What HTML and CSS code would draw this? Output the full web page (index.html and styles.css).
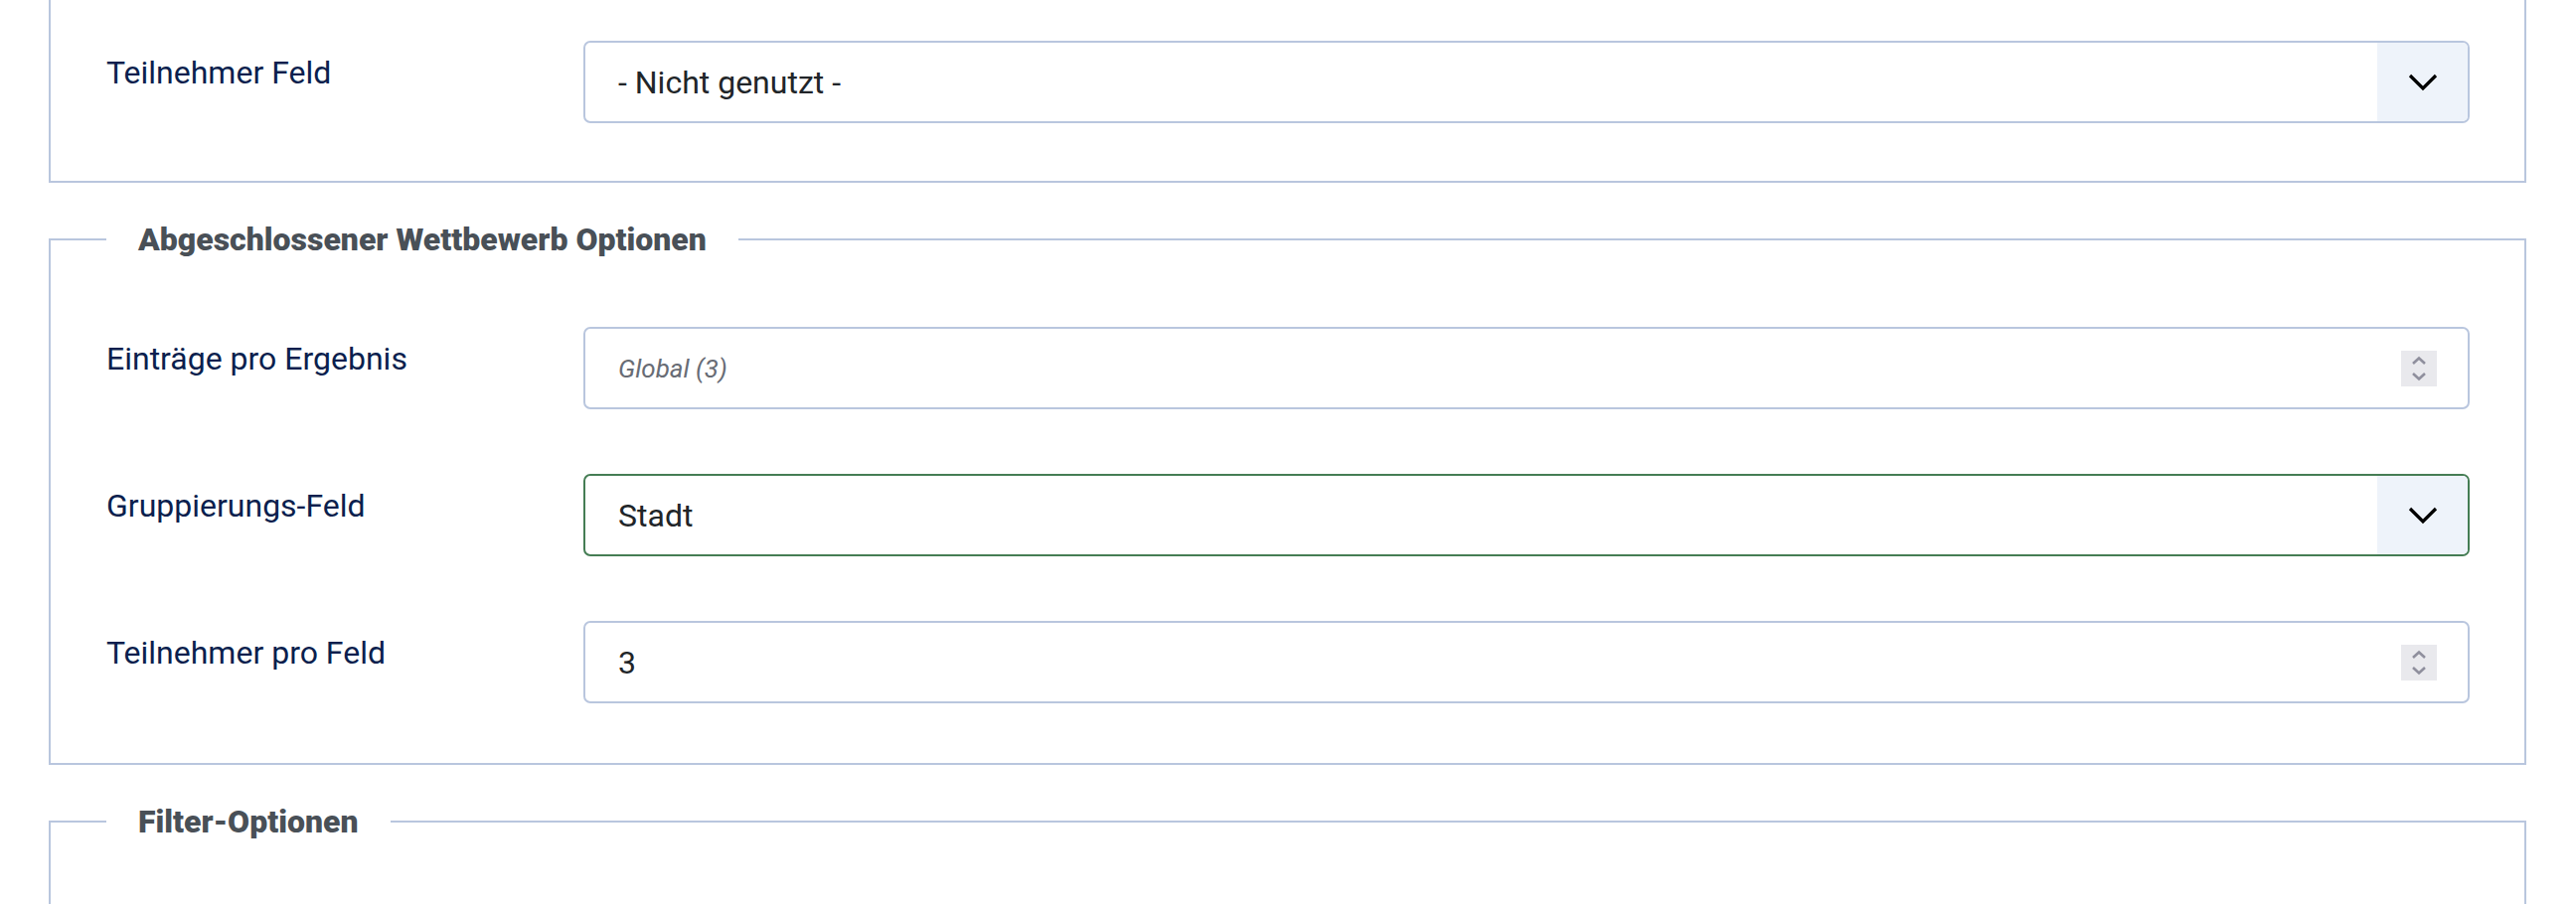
FILE: index.html
```html
<!DOCTYPE html>
<html lang="de">
<head>
    <meta charset="UTF-8">
    <meta name="viewport" content="width=device-width, initial-scale=1.0">
    <title>Wettbewerb Optionen</title>
    <link rel="stylesheet" href="styles.css">
</head>
<body>
<div class="page">

    <!-- Fortsetzung der vorherigen Gruppe -->
    <fieldset class="options continued">
        <div class="control-row">
            <label class="control-label">Teilnehmer Feld</label>
            <div class="form-select">
                <span class="value">- Nicht genutzt -</span>
                <span class="caret">
                    <svg width="30" height="18" viewBox="0 0 30 18"><path d="M2 2 L15 15 L28 2" fill="none" stroke="#000" stroke-width="3.2"/></svg>
                </span>
            </div>
        </div>
    </fieldset>

    <!-- Abgeschlossener Wettbewerb -->
    <fieldset class="options">
        <legend>Abgeschlossener Wettbewerb Optionen</legend>

        <div class="control-row">
            <label class="control-label">Einträge pro Ergebnis</label>
            <div class="form-control">
                <span class="value placeholder">Global (3)</span>
                <span class="spin">
                    <svg width="20" height="28" viewBox="0 0 20 28"><path d="M4 9 L10 3.5 L16 9 M4 19 L10 24.5 L16 19" fill="none" stroke="#8f8f9d" stroke-width="2.6"/></svg>
                </span>
            </div>
        </div>

        <div class="control-row">
            <label class="control-label">Gruppierungs-Feld</label>
            <div class="form-select valid">
                <span class="value">Stadt</span>
                <span class="caret">
                    <svg width="30" height="18" viewBox="0 0 30 18"><path d="M2 2 L15 15 L28 2" fill="none" stroke="#000" stroke-width="3.2"/></svg>
                </span>
            </div>
        </div>

        <div class="control-row">
            <label class="control-label">Teilnehmer pro Feld</label>
            <div class="form-control">
                <span class="value">3</span>
                <span class="spin">
                    <svg width="20" height="28" viewBox="0 0 20 28"><path d="M4 9 L10 3.5 L16 9 M4 19 L10 24.5 L16 19" fill="none" stroke="#8f8f9d" stroke-width="2.6"/></svg>
                </span>
            </div>
        </div>
    </fieldset>

    <!-- Filter -->
    <fieldset class="options">
        <legend>Filter-Optionen</legend>
        <div class="control-row empty"></div>
    </fieldset>

</div>
</body>
</html>
```

FILE: styles.css
```css
/* Seite */
body {
    margin: 0;
    background-color: #ffffff;
    font-family: Roboto, "Liberation Sans", Arial, sans-serif;
    overflow: hidden;
}

.page {
    padding: 0 50px 0 49px;
}

/* Gruppen */
.options {
    margin: 0 0 39px 0;
    padding: 70px 55px 60px 56px;
    border: 2px solid #b9c6de;
    min-width: 0;
}

.options.continued {
    border-top-width: 0;
    padding-top: 41px;
    padding-bottom: 58px;
}

.options legend {
    padding: 0 32px;
    font-size: 32px;
    line-height: 36px;
    font-weight: 900;
    color: #495057;
}

/* Zeilen */
.control-row {
    display: flex;
    align-items: flex-start;
    margin-bottom: 65px;
}

.control-row:last-child {
    margin-bottom: 0;
}

.control-row.empty {
    height: 200px;
}

.control-label {
    flex: 0 0 480px;
    padding-top: 8px;
    font-size: 32px;
    line-height: 1.5;
    color: #0b1f4e;
}

/* Eingabefelder */
.form-control,
.form-select {
    flex: 1;
    display: flex;
    align-items: center;
    box-sizing: border-box;
    height: 83px;
    border: 2px solid #b9c6de;
    border-radius: 7px;
    background-color: #fff;
    overflow: hidden;
}

.form-select.valid {
    border-color: #457d54;
}

.value {
    flex: 1;
    padding-left: 33px;
    font-size: 32px;
    color: #212529;
}

.value.placeholder {
    font-size: 26px;
    font-style: italic;
    color: #686c75;
}

.caret {
    align-self: stretch;
    width: 91px;
    display: flex;
    align-items: center;
    justify-content: center;
    background-color: #eef3fa;
}

.spin {
    width: 36px;
    height: 36px;
    margin-right: 31px;
    display: flex;
    align-items: center;
    justify-content: center;
    background-color: #e9e9ed;
}
```
